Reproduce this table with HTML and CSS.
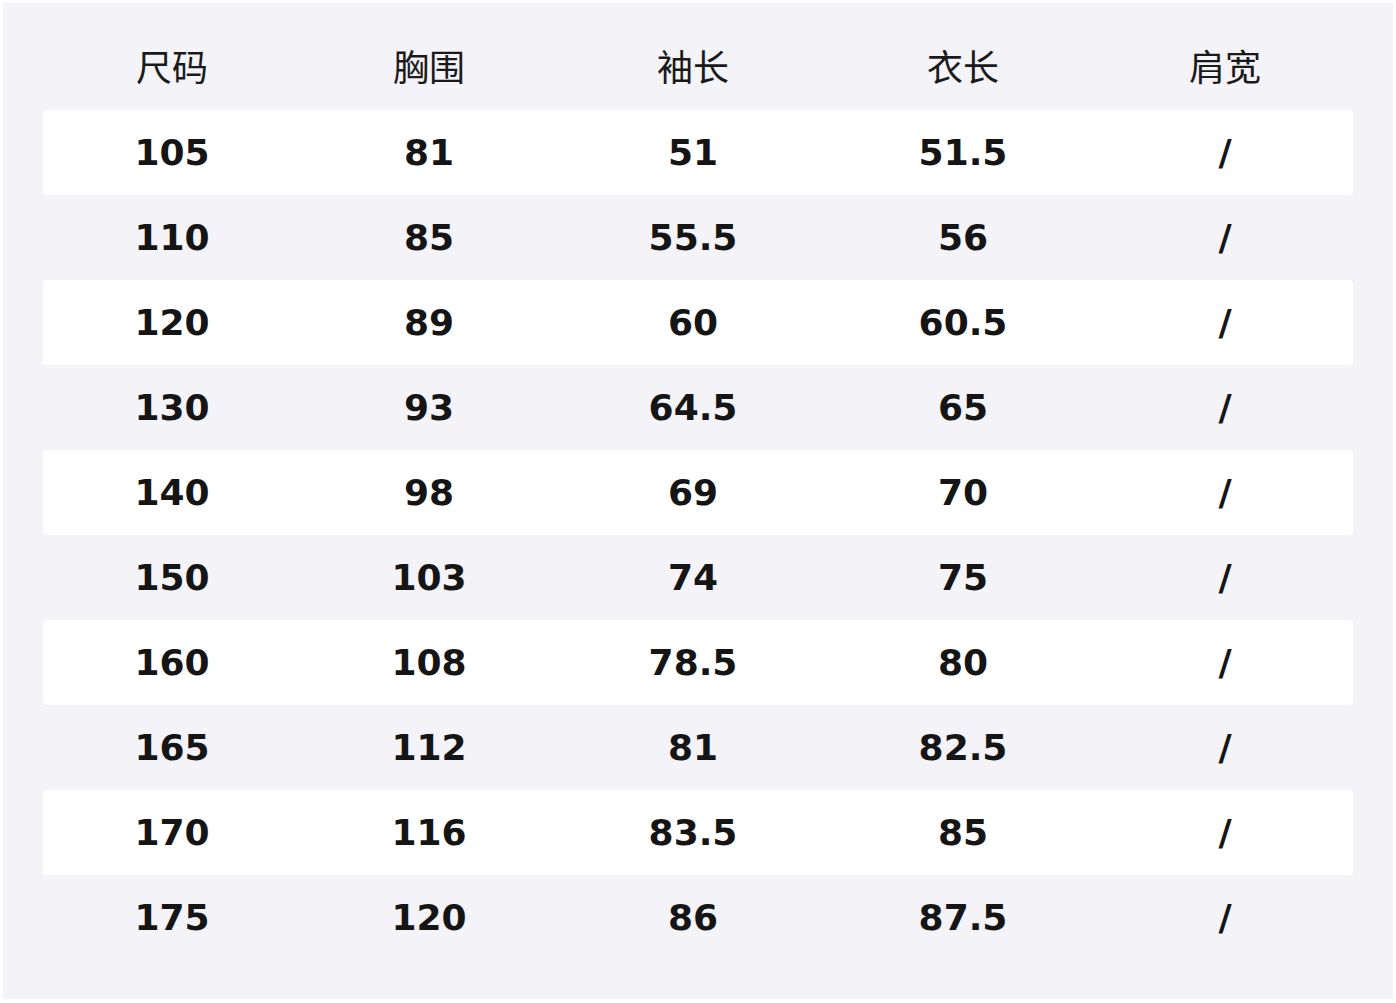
FILE: index.html
```html
<!DOCTYPE html>
<html lang="zh">
<head>
<meta charset="utf-8">
<title>尺码表</title>
<link rel="stylesheet" href="styles.css">
</head>
<body>
<div class="panel">
  <div class="row head">
    <div>尺码</div><div>胸围</div><div>袖长</div><div>衣长</div><div>肩宽</div>
  </div>
  <div class="row odd"><div>105</div><div>81</div><div>51</div><div>51.5</div><div>/</div></div>
  <div class="row"><div>110</div><div>85</div><div>55.5</div><div>56</div><div>/</div></div>
  <div class="row odd"><div>120</div><div>89</div><div>60</div><div>60.5</div><div>/</div></div>
  <div class="row"><div>130</div><div>93</div><div>64.5</div><div>65</div><div>/</div></div>
  <div class="row odd"><div>140</div><div>98</div><div>69</div><div>70</div><div>/</div></div>
  <div class="row"><div>150</div><div>103</div><div>74</div><div>75</div><div>/</div></div>
  <div class="row odd"><div>160</div><div>108</div><div>78.5</div><div>80</div><div>/</div></div>
  <div class="row"><div>165</div><div>112</div><div>81</div><div>82.5</div><div>/</div></div>
  <div class="row odd"><div>170</div><div>116</div><div>83.5</div><div>85</div><div>/</div></div>
  <div class="row"><div>175</div><div>120</div><div>86</div><div>87.5</div><div>/</div></div>
</div>
</body>
</html>
```

FILE: styles.css
```css
html, body {
  margin: 0;
  padding: 0;
  background: #ffffff;
}
.panel {
  margin: 3px 0 0 3px;
  width: 1390px;
  height: 996px;
  box-sizing: border-box;
  padding: 22px 40px 0 40px;
  background: #f3f3f8;
  display: flex;
  flex-direction: column;
}
.row {
  display: grid;
  grid-template-columns: 258px 256px 272px 268px 256px;
  height: 85px;
  align-items: center;
  justify-items: center;
  font-family: "DejaVu Sans", "Noto Sans CJK SC", sans-serif;
  font-weight: bold;
  font-size: 36px;
  color: #151515;
  border-radius: 3px;
}
.row.odd {
  background: #ffffff;
}
.row.head {
  font-family: "Noto Sans CJK SC", sans-serif;
  font-weight: normal;
  font-size: 36px;
  color: #1a1a1a;
}
.row > div {
  line-height: 1;
}
.row.head > div {
  padding-bottom: 6px;
}
```
